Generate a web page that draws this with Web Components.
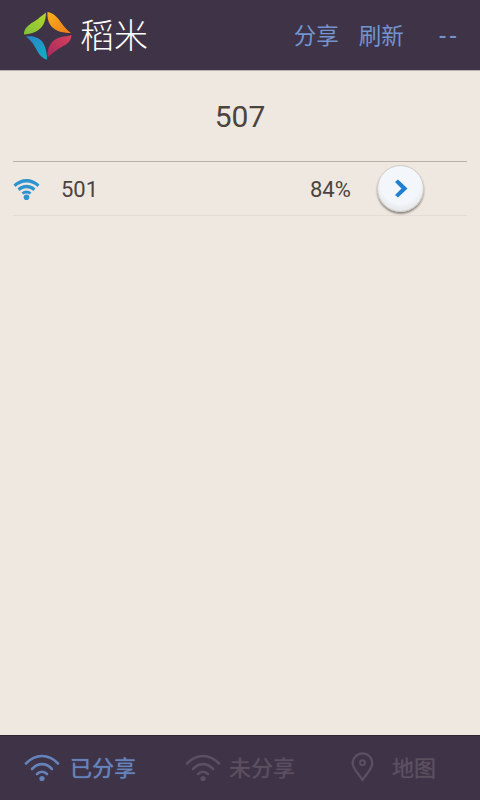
<!DOCTYPE html>
<html>
<head>
<meta charset="utf-8">
<style>
	html, body { margin: 0; height: 100%; }
	body { font-family: Roboto, "Noto Sans CJK SC", sans-serif; background: #efe8e1; }
</style>
</head>
<body>
<app-shell>
	<top-bar slot="top" title="稻米">
		<bar-link>分享</bar-link>
		<bar-link>刷新</bar-link>
		<bar-link class="dash">--</bar-link>
	</top-bar>
	<h-title>507</h-title>
	<net-row name="501" signal="84%"></net-row>
	<bottom-bar slot="bottom">
		<tab-item icon="wifi" active>已分享</tab-item>
		<tab-item icon="wifi">未分享</tab-item>
		<tab-item icon="pin">地图</tab-item>
	</bottom-bar>
</app-shell>

<script>
const WIFI = `<svg viewBox="0 0 36 30" fill="none" stroke="currentColor" stroke-linecap="round" stroke-width="2.6">
	<path d="M2 11.5C11.5 1.5 24.5 1.5 34 11.5"/>
	<path d="M8 17C14 10.5 22 10.5 28 17"/>
	<path d="M13 22C16 19 20 19 23 22"/>
	<circle cx="18" cy="26.5" r="2.6" fill="currentColor" stroke="none"/>
</svg>`;

const WIFI_SOLID = `<svg viewBox="0 0 27 22" fill="currentColor">
	<path d="M0.5 6.5C7.5 -1 19.5 -1 26.5 6.5L24.5 9C18.5 3 8.5 3 2.5 9Z"/>
	<path d="M4.5 10.5C9.5 5.5 17.5 5.5 22.5 10.5L20.3 13C16.5 9.3 10.5 9.3 6.7 13Z"/>
	<path d="M8.5 14.5C11.5 11.8 15.5 11.8 18.5 14.5L16.6 16.5C14.8 15 12.2 15 10.4 16.5Z"/>
	<circle cx="13.5" cy="19.2" r="2.8"/>
</svg>`;

const PIN = `<svg viewBox="0 0 24 30" fill="none" stroke="currentColor" stroke-width="2.4">
	<path d="M12 28.5C7 21 1.8 16.5 1.8 11A10.2 10.2 0 0 1 22.2 11C22.2 16.5 17 21 12 28.5Z" stroke-linejoin="round"/>
	<circle cx="12" cy="10.5" r="2.6" stroke-width="2"/>
</svg>`;

class AppShell extends HTMLElement {

	constructor() {

		super();

		this.attachShadow({ mode: 'open' });
		this.shadowRoot.innerHTML = `
			<style>
				:host { display: flex; flex-direction: column; height: 800px; background: #efe8e1; overflow: hidden; }
				main { flex: 1; padding: 0 13px; display: flex; flex-direction: column; }
			</style>
			<slot name="top"></slot>
			<main><slot></slot></main>
			<slot name="bottom"></slot>
		`;

	}

}

class TopBar extends HTMLElement {

	constructor() {

		super();

		this.attachShadow({ mode: 'open' });
		this.shadowRoot.innerHTML = `
			<style>
				:host { display: flex; align-items: center; height: 71px; box-sizing: border-box; padding: 0 23px 0 23px;
					background: #3f3347; border-bottom: 1px solid #b9b0ab; }
				svg { width: 50px; height: 50px; flex: none; margin-top: 1px; }
				.title { margin-left: 7px; font-size: 34px; font-weight: 300; line-height: 70px; color: #fff; flex: 1; padding-top: 2px; }
				nav { display: flex; align-items: center; margin-top: 1px; }
			</style>
			<svg viewBox="0 0 50 50">
				<defs>
					<linearGradient id="g1" x1="0" y1="1" x2="1" y2="0"><stop offset="0" stop-color="#7fbf3a"/><stop offset="1" stop-color="#b5d62a"/></linearGradient>
					<linearGradient id="g2" x1="0" y1="0" x2="1" y2="1"><stop offset="0" stop-color="#f9b31c"/><stop offset="1" stop-color="#ec7a1b"/></linearGradient>
					<linearGradient id="g3" x1="1" y1="0" x2="0" y2="1"><stop offset="0" stop-color="#d8405c"/><stop offset="1" stop-color="#a52a5c"/></linearGradient>
					<linearGradient id="g4" x1="0" y1="0" x2="1" y2="1"><stop offset="0" stop-color="#2a82c9"/><stop offset="1" stop-color="#12b0c4"/></linearGradient>
				</defs>
				<path d="M1 23.500C1 14 12 11 16 7C19 4.500 21 3 23 1.500C23 10 20 17 13 20.500C8 23 4 23 1 23.500Z" fill="url(#g1)"/>
				<path d="M24.500 1C31 2 35 7 38 11.500C41 16 44 19 48 22C39 22 31 20 27 13.500C25 10 24 5 24.500 1Z" fill="url(#g2)"/>
				<path d="M48.500 24C48.500 33 39 35 34 39C30 42 27 44 24.500 46.500C24 38 27 31 34 27.500C38 25.500 44 25.500 48.500 24Z" fill="url(#g3)"/>
				<path d="M3 25.500C11 24.500 18 27 21 33.500C23 38 24 43 24 48.500C20 48 16.500 44 14 39.500C11 34 8 29 3 25.500Z" fill="url(#g4)"/>
			</svg>
			<span class="title">${this.getAttribute('title')}</span>
			<nav><slot></slot></nav>
		`;

	}

}

class BarLink extends HTMLElement {

	constructor() {

		super();

		this.attachShadow({ mode: 'open' });
		this.shadowRoot.innerHTML = `
			<style>
				:host { display: block; font-size: 22.5px; line-height: 32px; color: #7394cf; margin-left: 20px; }
				:host(.dash) { margin-left: 35px; letter-spacing: 3px; margin-right: -3px; font-weight: 500; }
			</style>
			<slot></slot>
		`;

	}

}

class HTitle extends HTMLElement {

	constructor() {

		super();

		this.attachShadow({ mode: 'open' });
		this.shadowRoot.innerHTML = `
			<style>
				:host { display: block; height: 91px; line-height: 92px; box-sizing: border-box; text-align: center; font-size: 30px; color: #4a4340;
					border-bottom: 1px solid #b8b0a9; }
			</style>
			<slot></slot>
		`;

	}

}

class NetRow extends HTMLElement {

	constructor() {

		super();

		this.attachShadow({ mode: 'open' });
		this.shadowRoot.innerHTML = `
			<style>
				:host { display: flex; align-items: center; height: 54px; box-sizing: border-box; border-bottom: 1px solid #e3ddd6; font-size: 22px; color: #4a4340; }
				svg { width: 27px; height: 22px; flex: none; color: #2f93cf; }
				.name { margin-left: 21px; width: 249px; position: relative; top: 1px; }
				.signal { width: 67px; position: relative; top: 1px; }
				button { width: 47px; height: 47px; padding: 0; border: 1px solid #cfcac5; border-radius: 50%; display: flex; align-items: center; justify-content: center;
					background: radial-gradient(circle at 50% 40%, #f3f7fb 55%, #e4e6e6 80%, #d6d3cf); box-shadow: 0 2px 2px #8f8a86; }
				button svg { width: 14px; height: 19px; margin: 0; }
			</style>
			${WIFI_SOLID}
			<span class="name">${this.getAttribute('name')}</span>
			<span class="signal">${this.getAttribute('signal')}</span>
			<button><svg viewBox="0 0 14 19"><path d="M1 3L4 0.5L13.5 9.5L4 18.5L1 16L7.5 9.5Z" fill="#1f7fd0"/></svg></button>
		`;

	}

}

class BottomBar extends HTMLElement {

	constructor() {

		super();

		this.attachShadow({ mode: 'open' });
		this.shadowRoot.innerHTML = `
			<style>
				:host { display: grid; grid-template-columns: 161px 166px 1fr; height: 65px; align-items: center; padding-left: 24px; box-sizing: border-box;
					background: #3f3347; border-top: 1px solid #2e2534; }
			</style>
			<slot></slot>
		`;

	}

}

class TabItem extends HTMLElement {

	constructor() {

		super();

		const icon = this.getAttribute('icon') === 'pin' ? PIN : WIFI;

		this.attachShadow({ mode: 'open' });
		this.shadowRoot.innerHTML = `
			<style>
				:host { display: flex; align-items: center; font-size: 22px; line-height: 30px; font-weight: 400; color: #5a5060; text-shadow: 0 0 1px currentColor; }
				:host([active]) { color: #6583bb; }
				.icon { width: 36px; height: 30px; display: flex; justify-content: center; flex: none; margin-right: 8px; margin-top: -3px; }
				svg { height: 30px; }
				:host([active]) .icon { margin-right: 10px; }
				:host([icon="pin"]) .icon { width: 23px; margin-right: 18px; }
				.label { position: relative; top: 1px; }
			</style>
			<span class="icon">${icon}</span>
			<span class="label"><slot></slot></span>
		`;

	}

}

customElements.define('app-shell', AppShell);
customElements.define('top-bar', TopBar);
customElements.define('bar-link', BarLink);
customElements.define('h-title', HTitle);
customElements.define('net-row', NetRow);
customElements.define('bottom-bar', BottomBar);
customElements.define('tab-item', TabItem);
</script>
</body>
</html>
